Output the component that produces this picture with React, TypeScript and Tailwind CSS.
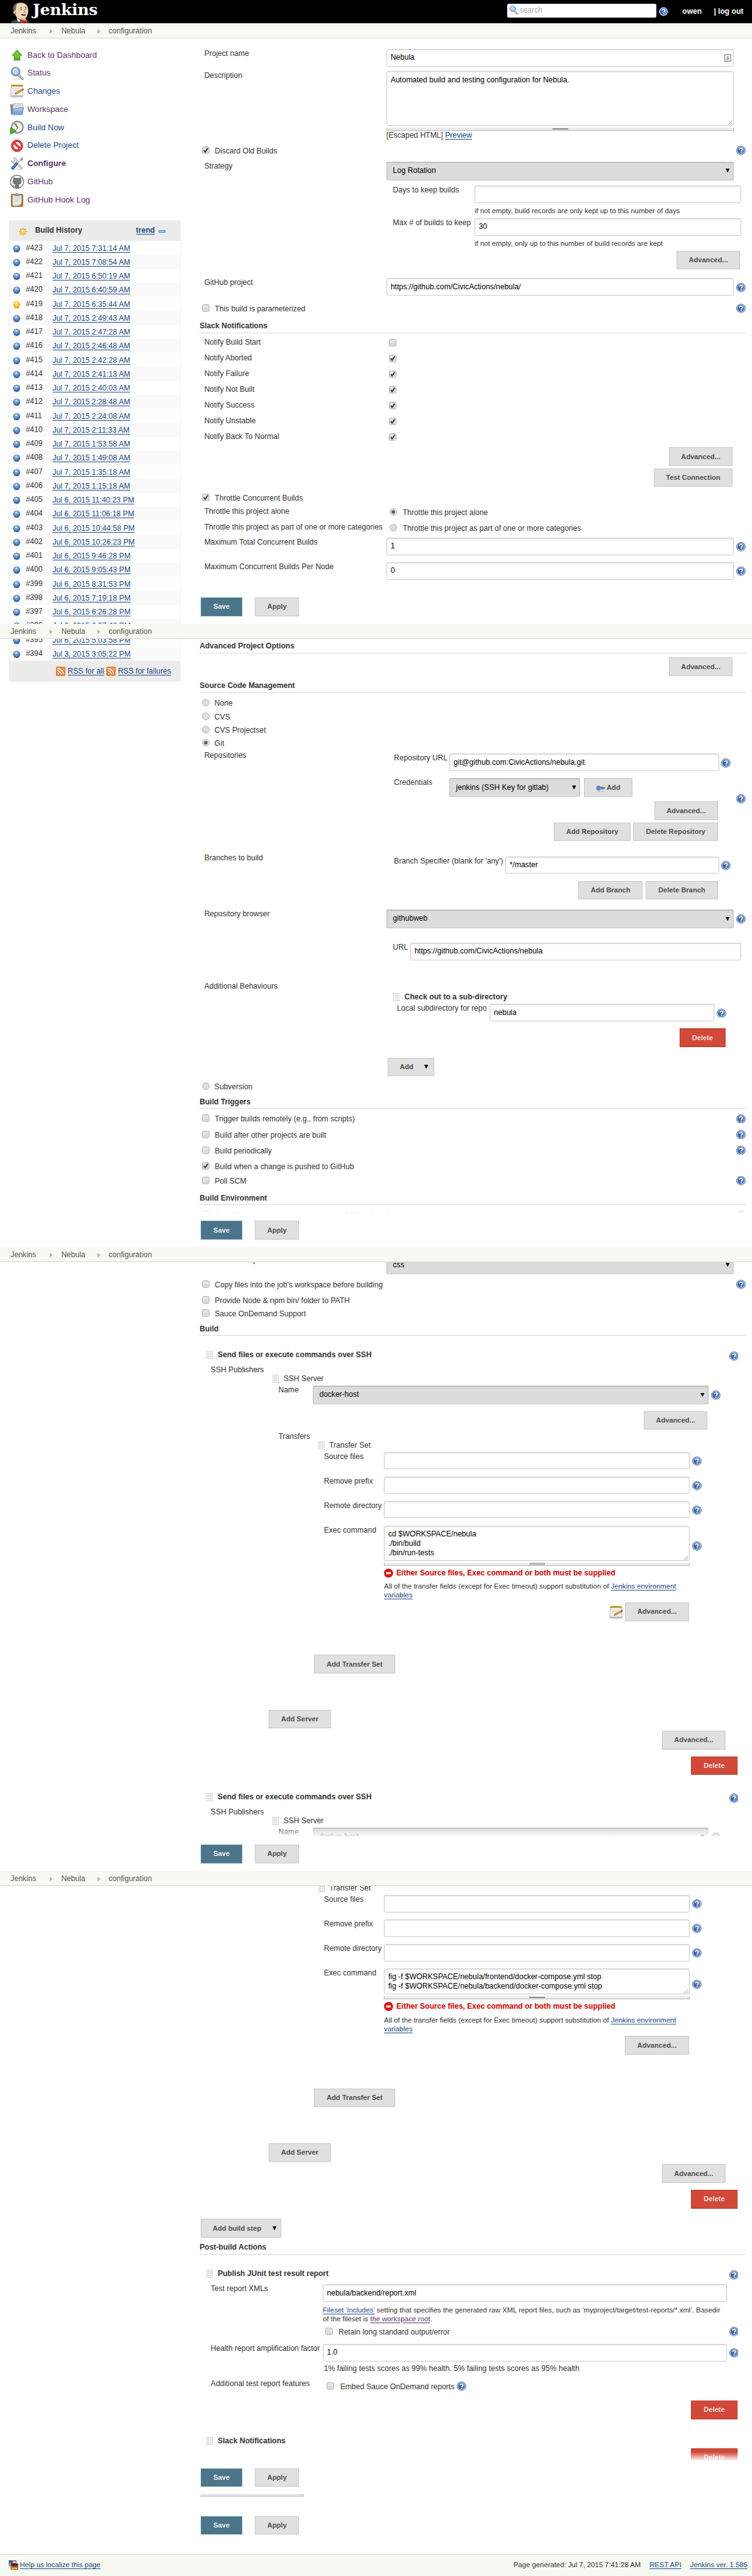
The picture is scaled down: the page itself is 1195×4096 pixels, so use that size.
import React from 'react';

const cx = (...parts: (string | undefined | false)[]) => parts.filter(Boolean).join(' ');

/* ---------- icons ---------- */

function Help({ className }: { className?: string }) {
  return (
    <svg viewBox="0 0 16 16" className={cx('h-4 w-4 shrink-0', className)}>
      <circle cx="8" cy="8" r="7.4" fill="#fff" stroke="#3b64a2" strokeWidth="1.1" />
      <circle cx="8" cy="8" r="6" fill="#3f68a6" />
      <path d="M8 2a6 6 0 0 1 6 6 6 6 0 0 1-4 5.6z" fill="#6f92c8" opacity="0.7" />
      <path d="M5.7 6.2C5.8 4.7 6.8 4 8.1 4c1.4 0 2.4.8 2.4 2 0 1.5-2.2 1.7-2.2 3.4" fill="none" stroke="#fff" strokeWidth="1.7" />
      <rect x="7.3" y="10.6" width="1.9" height="1.8" fill="#fff" />
    </svg>
  );
}

function Handle({ className }: { className?: string }) {
  return (
    <svg viewBox="0 0 12 14" className={cx('mt-[1px] h-[14px] w-3 shrink-0', className)}>
      {[0, 1, 2, 3, 4].map((r) =>
        [0, 1, 2, 3].map((c) => <rect key={`${r}-${c}`} x={c * 3} y={r * 3} width="1.7" height="1.5" fill="#b5b5b5" />),
      )}
    </svg>
  );
}

function ErrorIcon() {
  return (
    <svg viewBox="0 0 16 16" className="h-4 w-4 shrink-0">
      <circle cx="8" cy="8" r="7.7" fill="#c00" />
      <circle cx="8" cy="8" r="6.6" fill="#e01818" />
      <rect x="4" y="6.3" width="8" height="3.4" fill="#fff" />
    </svg>
  );
}

function Notepad({ className }: { className?: string }) {
  return (
    <svg viewBox="0 0 24 24" className={cx('h-6 w-6 shrink-0', className)}>
      <ellipse cx="12" cy="22" rx="11" ry="1.5" fill="#ddd" />
      <path d="M2 2.5h19.5l.5 18.5H1z" fill="#f4f4f2" stroke="#a5a5a2" strokeWidth="0.9" />
      <path d="M1.2 19h20.6v2.4H1z" fill="#bcbcb8" />
      <rect x="2" y="0.8" width="19.5" height="3" fill="#c4a915" />
      <path d="M3 .8v3M5.5.8v3M8 .8v3M10.500.8v3M13 .8v3M15.500.8v3M18 .8v3M20.500.8v3" stroke="#7c6a08" strokeWidth="0.7" />
      <path d="M4.500 7.500h13M4.500 10.500h10M4.500 13.500h6M4.500 16.500h5" stroke="#c6c6c6" strokeWidth="0.9" />
      <path d="M8.500 17l1.5-3 11-6 1.5 2.500-11 6z" fill="#e39a35" stroke="#8b5a16" strokeWidth="0.6" />
      <path d="M20 8.600l2-1.200q1.800 0 1.700 2l-2 1.300z" fill="#d84a3c" />
      <path d="M8.500 17l.8-1.600 1 1.200z" fill="#333" />
    </svg>
  );
}

function Magnifier({ className }: { className?: string }) {
  return (
    <svg viewBox="0 0 24 24" className={className}>
      <ellipse cx="11" cy="21.800" rx="8" ry="1.200" fill="#e4e4e4" />
      <path d="M14.500 14.500l7 6.500" stroke="#8c8c8c" strokeWidth="4" strokeLinecap="round" />
      <path d="M15 14.500l6.500 6" stroke="#c9c9c9" strokeWidth="2" strokeLinecap="round" />
      <circle cx="9.500" cy="8.500" r="7.400" fill="#bcd4f2" stroke="#8f95a3" strokeWidth="1.600" />
      <circle cx="9.500" cy="8.500" r="6" fill="none" stroke="#5b8ccf" strokeWidth="1.100" />
      <path d="M5 8a5 5 0 0 1 7-4.200" stroke="#fff" strokeWidth="1.500" fill="none" />
    </svg>
  );
}

const taskIcon = 'h-6 w-6 shrink-0';

const UpArrow = () => (
  <svg viewBox="0 0 24 24" className={taskIcon}>
    <ellipse cx="12" cy="20.500" rx="8" ry="1.300" fill="#ddd" />
    <path d="M12 2.500L20.500 12H17v8H7v-8H3.500z" fill="#55b318" stroke="#3f8a12" strokeWidth="0.8" />
    <path d="M12 4l6.500 7.300H16V15H8v-3.700H5.500z" fill="#86d04d" opacity="0.6" />
  </svg>
);
const Folder = () => (
  <svg viewBox="0 0 24 24" className={taskIcon}>
    <ellipse cx="12" cy="21.300" rx="10" ry="1.200" fill="#ddd" />
    <path d="M.8 3.500H6l1-1.300h3V20H2z" fill="#8a8a8a" stroke="#6d6d6d" strokeWidth="0.7" />
    <path d="M5.500 2H22l-.6 11H4.500z" fill="#e9e9e9" stroke="#999" strokeWidth="0.8" />
    <path d="M7.500 5h12M7.300 7.500h12" stroke="#bdbdbd" strokeWidth="0.8" />
    <path d="M5.500 10.500h8l1.800-1.700h8.200L21 20.500H3z" fill="#7aa9de" stroke="#4e7fba" strokeWidth="0.8" />
    <path d="M6.200 11.500h8l1.800-1.700h6.300l-.8 4.500H5.500z" fill="#a9c9ee" />
  </svg>
);
const BuildNow = () => (
  <svg viewBox="0 0 24 24" className={taskIcon}>
    <ellipse cx="13" cy="22.300" rx="8" ry="1.200" fill="#ddd" />
    <circle cx="12.500" cy="11" r="9.900" fill="#f1f1ec" stroke="#77779a" strokeWidth="2" />
    <circle cx="12.500" cy="11" r="8.300" fill="none" stroke="#c9c9d8" strokeWidth="0.9" />
    <path d="M12.500 11L7 5.500 12 3.500z" fill="#e8cb45" />
    <path d="M8 5l5 6.500-1.500 3" stroke="#333" strokeWidth="1.300" fill="none" />
    <path d="M.5 11.500l10.500 6-10.500 6z" fill="#4fae1c" stroke="#2e7a10" strokeWidth="0.7" />
  </svg>
);
const DeleteIcon = () => (
  <svg viewBox="0 0 24 24" className={taskIcon}>
    <ellipse cx="12" cy="21.800" rx="8" ry="1.200" fill="#ddd" />
    <circle cx="12" cy="11.500" r="8.300" fill="#fff" stroke="#b81414" strokeWidth="4" />
    <path d="M6 5.700l12 11.600" stroke="#b81414" strokeWidth="4" />
    <circle cx="12" cy="11.500" r="8.300" fill="none" stroke="#e24444" strokeWidth="2.600" />
    <path d="M6 5.700l12 11.600" stroke="#e24444" strokeWidth="2.600" />
  </svg>
);
const Tools = () => (
  <svg viewBox="0 0 24 24" className={taskIcon}>
    <ellipse cx="12" cy="21.800" rx="10" ry="1.200" fill="#e3e3e3" />
    <path d="M8 8l11.500 11.500" stroke="#9b9b9b" strokeWidth="3.800" strokeLinecap="round" />
    <path d="M8 8l11.500 11.500" stroke="#dedede" strokeWidth="2.400" strokeLinecap="round" />
    <path d="M7 1.800a5 5 0 1 1-4.800 5l2.800 1.700 2.700-2z" fill="#dcdcdc" stroke="#9b9b9b" strokeWidth="0.8" />
    <path d="M14 10.500l5-6.500" stroke="#b8b8b8" strokeWidth="1.800" />
    <path d="M17.500 5.500L20 1.500l2 1.500-1.200 4z" fill="#88a8d8" stroke="#6a86b0" strokeWidth="0.6" />
    <path d="M4.500 19.800l6.500-7.300" stroke="#2e5a9e" strokeWidth="5" strokeLinecap="round" />
    <path d="M4.500 19.500l6.300-7" stroke="#5f8fd3" strokeWidth="2.400" strokeLinecap="round" />
  </svg>
);
const GitHubIcon = () => (
  <svg viewBox="0 0 24 24" className={taskIcon}>
    <circle cx="12" cy="12" r="11.300" fill="#fff" stroke="#6f6f6f" strokeWidth="1.300" />
    <path
      d="M5.800 4.200c1.400 0 2.600.6 3.700 1.400 1.600-.3 3.400-.3 5 0 1.100-.8 2.300-1.400 3.700-1.400.5 1.300.5 2.500.2 3.600 1 1.200 1.400 2.500 1.200 4.200-.3 3-2.200 4.200-4.800 4.600.5.700.7 1.400.7 2.400v3.700a11 11 0 0 1-7 0v-2.400c-2 .3-2.800-.4-3.400-1.700-.3-.6-.7-1-1.100-1.400 1.300-.2 1.900.6 2.500 1.400.5.700 1.100.9 2.100.6.100-1 .4-1.800.8-2.400-2.600-.5-4.600-1.700-4.900-4.800-.2-1.700.3-3 1.200-4.200-.3-1.100-.3-2.300.1-3.600z"
      fill="#777"
    />
  </svg>
);
const Clipboard = () => (
  <svg viewBox="0 0 24 24" className={taskIcon}>
    <rect x="2" y="1.800" width="20" height="21.500" rx="0.800" fill="#a9772b" stroke="#85591a" strokeWidth="0.7" />
    <path d="M4.500 3.500h15v18h-15z" fill="#ececea" />
    <path d="M7 7.500h10M7 10h10M7 12.500h9M7 15h7" stroke="#c3c3c3" strokeWidth="1" />
    <path d="M19.500 17.500v4h-5z" fill="#8d8d8d" />
    <rect x="7" y="1.500" width="10" height="3.600" rx="1" fill="#8b8f8a" />
    <rect x="9.500" y="0.200" width="5" height="2.500" rx="1" fill="#9fa39e" />
  </svg>
);

const Sun = () => (
  <svg viewBox="0 0 16 16" className="h-4 w-4">
    <path d="M8 .5l1.500 2.800h-3zM8 15.500l1.500-2.800h-3zM.5 8l2.800-1.500v3zM15.500 8l-2.800-1.500v3zM2.700 2.700l3 .9-2.100 2.100zM13.300 2.700l-3 .9 2.100 2.100zM2.700 13.300l3-.9-2.100-2.100zM13.300 13.300l-3-.9 2.100-2.100z" fill="#ee9a2c" />
    <circle cx="8" cy="8" r="4.300" fill="#fbd84a" stroke="#f0a830" strokeWidth="0.8" />
    <circle cx="7.300" cy="7" r="2" fill="#fff3a8" />
  </svg>
);

function Ball({ yellow }: { yellow?: boolean }) {
  return (
    <svg viewBox="0 0 16 16" className="h-4 w-4">
      <defs>
        <radialGradient id={yellow ? 'ball-y' : 'ball-b'} cx="0.45" cy="0.32" r="0.65">
          <stop offset="0" stopColor={yellow ? '#fff2b0' : '#d9e3ef'} />
          <stop offset="0.45" stopColor={yellow ? '#fbd04a' : '#7296c6'} />
          <stop offset="1" stopColor={yellow ? '#ee9d1c' : '#2a5798'} />
        </radialGradient>
      </defs>
      <ellipse cx="8" cy="13.600" rx="5" ry="1.300" fill="#ccc" />
      <circle cx="8" cy="7.800" r="6.100" fill={yellow ? 'url(#ball-y)' : 'url(#ball-b)'} />
    </svg>
  );
}

const Rss = () => (
  <svg viewBox="0 0 16 16" className="h-4 w-4 shrink-0">
    <rect width="16" height="16" rx="2" fill="#e8772e" />
    <rect x="1" y="1" width="14" height="7" rx="1.500" fill="#f3a15e" opacity="0.6" />
    <circle cx="4.300" cy="11.800" r="1.500" fill="#fff" />
    <path d="M3 7.300a5.700 5.700 0 0 1 5.700 5.900M3 3.600a9.500 9.500 0 0 1 9.500 9.600" stroke="#fff" strokeWidth="1.700" fill="none" />
  </svg>
);

const Butler = () => (
  <svg viewBox="0 0 34 37" className="h-[37px] w-[34px]">
    <path d="M0 37c1-5 5-6 10-6.500h14c4 .5 7.500 2 8.500 6.500z" fill="#2c5064" stroke="#111" strokeWidth="0.6" />
    <path d="M10 27l2 6 7 4 7-5v-6z" fill="#f3f3f3" />
    <path d="M5.500 11C6 4 12 .8 18.500 1.200 26 1.700 30.500 7 30.300 15c-.1 8-3.500 15-10.300 15.500C12 31 8 25 7 19.500 4.500 18 4.500 13 5.500 11z" fill="#f0d6b7" stroke="#2a2018" strokeWidth="0.8" />
    <path d="M4.500 14C3 8 6 2.500 13 1.300c-2.500 2.500-4 5-3.700 9.200L8 15.500z" fill="#6e6660" />
    <path d="M6 15c-2 0-2.500 5 .8 6l2-1.500z" fill="#f0d6b7" stroke="#2a2018" strokeWidth="0.6" />
    <path d="M15.500 10.500q2-1.500 4 0M23.500 9.500q2-1 3.800.5" stroke="#2a2018" strokeWidth="0.9" fill="none" />
    <circle cx="18" cy="13" r="0.9" fill="#222" />
    <circle cx="25.300" cy="12.500" r="0.900" fill="#222" />
    <path d="M22.500 13l2.500 5.500-3 .8" stroke="#8a6a48" strokeWidth="0.800" fill="none" />
    <path d="M17.500 22.500c2-2.200 4-1.800 5.300-.6 1.500-1 3-.6 4 .8-3 1.500-6.500 1.500-9.300-.2z" fill="#3b3530" />
    <path d="M16 30.500l6.500 2 6.500-2.500v6.500l-6-1.500-7 2z" fill="#d9352d" stroke="#5a0e0c" strokeWidth="0.7" />
    <circle cx="22.700" cy="33.700" r="1.700" fill="#b92520" />
  </svg>
);

const Flags = () => (
  <svg viewBox="0 0 16 16" className="h-4 w-4">
    <rect x="0.500" y="0.500" width="12" height="9" fill="#fff" stroke="#555" />
    <path d="M1 2.500h11M1 5h11M1 7.500h11" stroke="#d9534f" strokeWidth="1.200" />
    <rect x="1" y="1" width="6" height="4.500" fill="#3a5fa8" />
    <rect x="4" y="6" width="11.500" height="9.500" fill="#e9c52b" stroke="#444" />
    <rect x="4.500" y="6.500" width="10.500" height="3" fill="#222" />
    <rect x="4.500" y="9.500" width="10.500" height="3" fill="#d33" />
  </svg>
);

const KeyIcon = () => (
  <svg viewBox="0 0 16 16" className="h-4 w-4">
    <ellipse cx="8" cy="14.500" rx="6" ry="0.900" fill="#c4c4c4" />
    <path d="M1 7.500L3 5l4 .5 1 1.500h7v3h-2v1h-2v-1H8l-1 2-4 .5-2-2z" fill="#5c8acb" stroke="#3d69a8" strokeWidth="0.700" />
    <path d="M12.500 0l1 2 2 1-2 1-1 2-1-2-2-1 2-1z" fill="#f6e34c" />
  </svg>
);

/* ---------- form controls ---------- */

function Input({ value, className }: { value?: string; className: string }) {
  return (
    <div className={cx('flex h-[30px] shrink-0 items-center rounded-[3px] border border-[#ccc] bg-white px-1.5 text-black shadow-[inset_0_1px_2px_rgba(0,0,0,0.12)]', className)}>
      {value}
    </div>
  );
}

const Down = ({ className }: { className?: string }) => (
  <svg viewBox="0 0 7 7" className={cx('h-[7px] w-[7px]', className)}>
    <path d="M0 0h7L3.500 7z" fill="#000" />
  </svg>
);

function Select({ value, className }: { value: string; className: string }) {
  return (
    <div className={cx('flex h-8 shrink-0 items-center justify-between rounded-[2px] border border-[#c8c8c8] bg-[#dcdcdc] pr-1.5 pl-2.5 text-black shadow-[inset_0_1px_2px_rgba(0,0,0,0.15)]', className)}>
      <span>{value}</span>
      <Down />
    </div>
  );
}

function Btn({ children, className }: { children: React.ReactNode; className: string }) {
  return (
    <div className={cx('flex h-8 shrink-0 items-center justify-center border border-[#c8c8c8] bg-[#e0e0e0] text-[12px] font-bold whitespace-nowrap text-[#4f4f4f]', className)}>
      {children}
    </div>
  );
}

const Advanced = () => <Btn className="w-[109px]">Advanced...</Btn>;

function DeleteBtn() {
  return (
    <div className="flex h-8 w-[79px] shrink-0 items-center justify-center border border-[#b53a2b] bg-[#d24939] text-[12px] font-bold text-[#f3dfdc]">
      Delete
    </div>
  );
}

function Check({ on, className }: { on?: boolean; className?: string }) {
  return (
    <svg viewBox="0 0 13 13" className={cx('h-[13px] w-[13px] shrink-0', className)}>
      <rect x="0.600" y="0.600" width="11.600" height="11.600" rx="2" fill="#e4e4e4" stroke="#a6a6a6" strokeWidth="1" />
      <rect x="1.500" y="6.500" width="10" height="5" rx="1" fill="#d9d9d9" />
      {on && <path d="M3 6.300l2.500 3L10 2.800" stroke="#3a3a3a" strokeWidth="2.200" fill="none" />}
    </svg>
  );
}

function Radio({ on, className }: { on?: boolean; className?: string }) {
  return (
    <svg viewBox="0 0 13 13" className={cx('h-[13px] w-[13px] shrink-0', className)}>
      <circle cx="6.500" cy="6.500" r="5.900" fill="#dedede" stroke="#adadad" />
      {on && <circle cx="6.500" cy="6.500" r="3" fill="#5a5a5a" />}
    </svg>
  );
}

function Row({ children, className }: { children?: React.ReactNode; className: string }) {
  return <div className={cx('flex shrink-0 items-start', className)}>{children}</div>;
}

function Label({ children, className = 'w-[320px] pl-2' }: { children: React.ReactNode; className?: string }) {
  return <div className={cx('shrink-0 whitespace-nowrap', className)}>{children}</div>;
}

function Header({ children, className }: { children: React.ReactNode; className: string }) {
  return <div className={cx('h-5 shrink-0 border-b border-[#dadada] font-bold', className)}>{children}</div>;
}

function CheckRow({ label, on, help, className }: { label: string; on?: boolean; help?: boolean; className: string }) {
  return (
    <Row className={className}>
      <Check on={on} className="ml-1" />
      <div className="ml-[9px] flex-1">{label}</div>
      {help && <Help className="-mt-px" />}
    </Row>
  );
}

function RadioRow({ label, on, className }: { label: string; on?: boolean; className: string }) {
  return (
    <Row className={className}>
      <Radio on={on} className="ml-1" />
      <div className="ml-[8.500px] pl-2">{label}</div>
    </Row>
  );
}

function Grip() {
  return (
    <div className="mt-[3px] flex h-[5px] w-full flex-col items-center justify-center gap-px border-x border-b border-[#b5b5b5] bg-[#ececec]">
      <div className="h-px w-[27px] bg-[#888]" />
      <div className="h-px w-[27px] bg-[#888]" />
    </div>
  );
}

function Area({ lines, className }: { lines: string[]; className: string }) {
  return (
    <div className={cx('flex justify-between rounded-[3px] border border-[#ccc] bg-white pt-1.5 pl-1.5 text-black shadow-[inset_0_1px_2px_rgba(0,0,0,0.12)]', className)}>
      <div>
        {lines.map((l) => (
          <div key={l}>{l}</div>
        ))}
      </div>
      <svg viewBox="0 0 10 10" className="h-2.5 w-2.5 self-end">
        <path d="M1 9l7-7M5 9l3-3" stroke="#777" strokeWidth="0.900" />
      </svg>
    </div>
  );
}

const Link = ({ children, visited }: { children: React.ReactNode; visited?: boolean }) => (
  <span className={cx('underline underline-offset-2', visited ? 'text-[#5c3566]' : 'text-[#204a87]')}>{children}</span>
);

/* ---------- page furniture ---------- */

function Crumbs() {
  const arrow = (
    <svg viewBox="0 0 5 8" className="mt-px h-2 w-[5px]">
      <path d="M0 0l5 4-5 4z" fill="#b0b3ac" />
    </svg>
  );
  return (
    <div className="flex h-[26px] shrink-0 items-center border-b border-[#d3d7cf] bg-[#f6faf2] pt-0.5 text-[#555753]">
      <div className="w-[67px] pl-[18px]">Jenkins</div>
      <div className="w-[38px] pl-[18px]">{arrow}</div>
      <div className="w-[62px]">Nebula</div>
      <div className="w-[19px]">{arrow}</div>
      <div>configuration</div>
    </div>
  );
}

function SaveBar({ className }: { className?: string }) {
  return (
    <div className={cx('flex shrink-0 gap-[22px] pl-0.5', className)}>
      <div className="flex h-8 w-[71px] items-center justify-center border border-[#5a8ca3] bg-[#4b758b] text-[12px] font-bold text-[#eeeeee]">Save</div>
      <Btn className="w-[75px]">Apply</Btn>
    </div>
  );
}

const Fade = () => <div className="absolute inset-x-0 bottom-0 h-[15px] bg-linear-to-b from-white/0 to-white" />;

const tasks: { label: string; icon: React.ReactNode; color: string }[] = [
  { label: 'Back to Dashboard', icon: <UpArrow />, color: 'text-[#5c3566]' },
  { label: 'Status', icon: <Magnifier className={taskIcon} />, color: 'text-[#5c3566]' },
  { label: 'Changes', icon: <Notepad />, color: 'text-[#204a87]' },
  { label: 'Workspace', icon: <Folder />, color: 'text-[#5c3566]' },
  { label: 'Build Now', icon: <BuildNow />, color: 'text-[#204a87]' },
  { label: 'Delete Project', icon: <DeleteIcon />, color: 'text-[#204a87]' },
  { label: 'Configure', icon: <Tools />, color: 'text-[#5c3566] font-bold' },
  { label: 'GitHub', icon: <GitHubIcon />, color: 'text-[#5c3566]' },
  { label: 'GitHub Hook Log', icon: <Clipboard />, color: 'text-[#5c3566]' },
];

const builds: [number, string][] = [
  [423, 'Jul 7, 2015 7:31:14 AM'],
  [422, 'Jul 7, 2015 7:08:54 AM'],
  [421, 'Jul 7, 2015 6:50:19 AM'],
  [420, 'Jul 7, 2015 6:40:59 AM'],
  [419, 'Jul 7, 2015 6:35:44 AM'],
  [418, 'Jul 7, 2015 2:49:43 AM'],
  [417, 'Jul 7, 2015 2:47:28 AM'],
  [416, 'Jul 7, 2015 2:46:48 AM'],
  [415, 'Jul 7, 2015 2:42:28 AM'],
  [414, 'Jul 7, 2015 2:41:13 AM'],
  [413, 'Jul 7, 2015 2:40:03 AM'],
  [412, 'Jul 7, 2015 2:28:48 AM'],
  [411, 'Jul 7, 2015 2:24:08 AM'],
  [410, 'Jul 7, 2015 2:11:33 AM'],
  [409, 'Jul 7, 2015 1:53:58 AM'],
  [408, 'Jul 7, 2015 1:49:08 AM'],
  [407, 'Jul 7, 2015 1:35:18 AM'],
  [406, 'Jul 7, 2015 1:15:18 AM'],
  [405, 'Jul 6, 2015 11:40:23 PM'],
  [404, 'Jul 6, 2015 11:06:18 PM'],
  [403, 'Jul 6, 2015 10:44:58 PM'],
  [402, 'Jul 6, 2015 10:26:23 PM'],
  [401, 'Jul 6, 2015 9:46:28 PM'],
  [400, 'Jul 6, 2015 9:05:43 PM'],
  [399, 'Jul 6, 2015 8:31:53 PM'],
  [398, 'Jul 6, 2015 7:19:18 PM'],
  [397, 'Jul 6, 2015 6:26:28 PM'],
  [396, 'Jul 6, 2015 6:07:43 PM'],
  [395, 'Jul 6, 2015 5:03:58 PM'],
  [394, 'Jul 3, 2015 3:05:22 PM'],
];

function BuildRow({ build }: { build: [number, string] }) {
  const [id, when] = build;
  return (
    <div className={cx('flex h-6 shrink-0 items-start border-x border-[#eee] pt-1', id % 2 === 0 && 'bg-[#fafafa]')}>
      <div className="w-7 pt-px pl-1">
        <Ball yellow={id === 419} />
      </div>
      <div className="w-[46px]">#{id}</div>
      <div className="pt-px">
        <Link>{when}</Link>
      </div>
    </div>
  );
}

/* ---------- form sections ---------- */

const notify: [string, boolean][] = [
  ['Notify Build Start', false],
  ['Notify Aborted', true],
  ['Notify Failure', true],
  ['Notify Not Built', true],
  ['Notify Success', true],
  ['Notify Unstable', true],
  ['Notify Back To Normal', true],
];

function GeneralForm() {
  return (
    <div className="relative flex h-[944px] shrink-0 flex-col overflow-hidden pt-[18px]">
      <Row className="h-[38px]">
        <Label>Project name</Label>
        <div className="flex h-[30px] w-[595px] items-center justify-between rounded-[3px] border border-[#ccc] bg-white pr-[3px] pl-1.5 text-black shadow-[inset_0_1px_2px_rgba(0,0,0,0.12)]">
          <span>Nebula</span>
          <svg viewBox="0 0 12 13" className="h-[13px] w-3">
            <rect x="0.800" y="0.800" width="10.400" height="11.400" fill="#fff" stroke="#8c8c8c" strokeWidth="1.500" />
            <circle cx="6" cy="4.700" r="1.300" fill="#777" />
            <path d="M3.500 6.500h5V8h-5zM3.500 8.700h5v1.200h-5z" fill="#999" />
          </svg>
        </div>
      </Row>
      <Row className="h-[129px]">
        <Label>Description</Label>
        <div className="w-[595px]">
          <Area className="h-[94px]" lines={['Automated build and testing configuration for Nebula.']} />
          <Grip />
          <div>
            [Escaped HTML] <Link>Preview</Link>
          </div>
        </div>
      </Row>
      <CheckRow label="Discard Old Builds" on help className="h-[26px]" />
      <Row className="h-[41px]">
        <Label>Strategy</Label>
        <Select className="w-[595px]" value="Log Rotation" />
      </Row>
      <Row className="h-14 pl-[331px]">
        <Label className="w-[140px]">Days to keep builds</Label>
        <div>
          <Input className="w-[457px]" />
          <div className="mt-1.5 text-[12.200px]">if not empty, build records are only kept up to this number of days</div>
        </div>
      </Row>
      <Row className="h-14 pl-[331px]">
        <Label className="w-[140px]">Max # of builds to keep</Label>
        <div>
          <Input className="w-[457px]" value="30" />
          <div className="mt-1.5 text-[12.200px]">if not empty, only up to this number of build records are kept</div>
        </div>
      </Row>
      <Row className="h-[47px] justify-end pr-[9px]">
        <Advanced />
      </Row>
      <Row className="h-[45px]">
        <Label>GitHub project</Label>
        <Input className="w-[595px]" value="https://github.com/CivicActions/nebula/" />
        <Help className="mt-2 ml-1" />
      </Row>
      <CheckRow label="This build is parameterized" help className="h-[29px]" />
      <Header className="mb-[7px]">Slack Notifications</Header>
      {notify.map(([label, on]) => (
        <Row key={label} className="h-[27px]">
          <Label className="w-[324px] pt-px pl-2">{label}</Label>
          <Check on={on} className="mt-[3px]" />
        </Row>
      ))}
      <Row className="h-9 justify-end pr-[22px]">
        <Advanced />
      </Row>
      <Row className="h-[43px] justify-end pr-[22px]">
        <Btn className="w-[135px]">Test Connection</Btn>
      </Row>
      <CheckRow label="Throttle Concurrent Builds" on className="h-[23px]" />
      <Row className="h-[27px]">
        <Label className="w-[325px] pl-2">Throttle this project alone</Label>
        <Radio on className="mt-0.5" />
        <div className="mt-0.5 ml-2.5">Throttle this project alone</div>
      </Row>
      <Row className="h-[26px]">
        <Label className="w-[325px] pl-2">Throttle this project as part of one or more categories</Label>
        <Radio className="mt-0.5" />
        <div className="mt-0.5 ml-2.5">Throttle this project as part of one or more categories</div>
      </Row>
      <Row className="h-[42px]">
        <Label>Maximum Total Concurrent Builds</Label>
        <Input className="w-[595px]" value="1" />
        <Help className="mt-2 ml-1" />
      </Row>
      <Row className="h-[46px]">
        <Label>Maximum Concurrent Builds Per Node</Label>
        <Input className="w-[595px]" value="0" />
        <Help className="mt-2 ml-1" />
      </Row>
    </div>
  );
}

function ScmForm() {
  return (
    <div className="relative flex h-[985px] shrink-0 flex-col overflow-hidden pt-[5px]">
      <Header className="mb-[7px]">Advanced Project Options</Header>
      <Row className="h-[41px] justify-end pr-[22px]">
        <Advanced />
      </Row>
      <Header className="mb-2.5">Source Code Management</Header>
      <ScmRadio label="None" className="h-[23px]" />
      <ScmRadio label="CVS" className="h-[23px]" />
      <ScmRadio label="CVS Projectset" className="h-[23px]" />
      <ScmRadio label="Git" on className="h-5" />
      <Row className="h-[176px]">
        <Label>Repositories</Label>
        <div className="w-[599px] pt-[5px]">
          <Row className="h-[42px]">
            <Label className="w-[108px] pl-[13px]">Repository URL</Label>
            <Input className="w-[462px]" value="git@github.com:CivicActions/nebula.git" />
            <Help className="mt-2 ml-1" />
          </Row>
          <Row className="h-10">
            <Label className="w-[108px] pl-[13px]">Credentials</Label>
            <Select className="w-[224px]" value="jenkins (SSH Key for gitlab)" />
            <Btn className="ml-1.5 w-[84px] gap-0.5">
              <KeyIcon />
              Add
            </Btn>
          </Row>
          <Row className="h-9 justify-end pr-[31px]">
            <Advanced />
          </Row>
          <Row className="justify-end gap-[5px] pr-[31px]">
            <Btn className="w-[131px]">Add Repository</Btn>
            <Btn className="w-[145px]">Delete Repository</Btn>
          </Row>
        </div>
        <Help className="mt-[75px]" />
      </Row>
      <Row className="h-24">
        <Label>Branches to build</Label>
        <div className="w-[599px] pt-[5px]">
          <Row className="h-[42px]">
            <Label className="w-[204px] pl-[13px]">Branch Specifier (blank for 'any')</Label>
            <Input className="w-[366px]" value="*/master" />
            <Help className="mt-2 ml-1" />
          </Row>
          <Row className="justify-end gap-[5px] pr-[31px]">
            <Btn className="w-[110px]">Add Branch</Btn>
            <Btn className="w-[124px]">Delete Branch</Btn>
          </Row>
        </div>
      </Row>
      <Row className="h-[57px]">
        <Label>Repository browser</Label>
        <Select className="w-[595px]" value="githubweb" />
        <Help className="mt-[9px] ml-1" />
      </Row>
      <Row className="h-[67px] pl-[331px]">
        <Label className="w-[30px]">URL</Label>
        <Input className="w-[567px]" value="https://github.com/CivicActions/nebula" />
      </Row>
      <Row className="h-[173px]">
        <Label>Additional Behaviours</Label>
        <div className="w-[595px] pt-[18px]">
          <Row className="h-5 gap-[7px] pl-3 font-bold">
            <Handle />
            Check out to a sub-directory
          </Row>
          <Row className="h-[42px]">
            <Label className="w-[177px] pl-[18px]">Local subdirectory for repo</Label>
            <Input className="w-[385px]" value="nebula" />
            <Help className="mt-2 ml-1" />
          </Row>
          <Row className="h-[50px] justify-end pr-3.5">
            <DeleteBtn />
          </Row>
          <Btn className="ml-0.5 w-20 gap-[19px] pl-[11px]">
            Add
            <Down className="h-1.5" />
          </Btn>
        </div>
      </Row>
      <ScmRadio label="Subversion" className="h-[25px]" />
      <Header className="mb-2.5">Build Triggers</Header>
      <CheckRow label="Trigger builds remotely (e.g., from scripts)" help className="h-[27px]" />
      <CheckRow label="Build after other projects are built" help className="h-[27px]" />
      <CheckRow label="Build periodically" help className="h-[27px]" />
      <CheckRow label="Build when a change is pushed to GitHub" on className="h-[25px]" />
      <CheckRow label="Poll SCM" help className="h-[29px]" />
      <Header className="mb-2.5">Build Environment</Header>
      <CheckRow label="Send files or execute commands over SSH before the build starts" help className="h-[27px]" />
      <Fade />
    </div>
  );
}

function ScmRadio({ label, on, className }: { label: string; on?: boolean; className: string }) {
  return (
    <Row className={className}>
      <Radio on={on} className="ml-[4.500px]" />
      <div className="ml-2">{label}</div>
    </Row>
  );
}

function StepTitle({ children, help, className }: { children: React.ReactNode; help?: boolean; className: string }) {
  return (
    <Row className={cx('pl-3 font-bold', className)}>
      <Handle />
      <div className="ml-[7px] flex-1">{children}</div>
      {help && <Help className="mt-0.5 mr-3" />}
    </Row>
  );
}

function ServerPart() {
  return (
    <>
      <StepTitle help className="h-[26px]">
        Send files or execute commands over SSH
      </StepTitle>
      <Row className="h-[15px] pl-[19px]">SSH Publishers</Row>
      <Row className="h-[19px] gap-[7px] pl-[125px]">
        <Handle />
        SSH Server
      </Row>
      <Row className="h-11 pl-[135px]">
        <Label className="w-[59px]">Name</Label>
        <Select className="w-[678px]" value="docker-host" />
        <Help className="mt-[9px] ml-1" />
      </Row>
      <Row className="h-9 justify-end pr-[65px]">
        <Advanced />
      </Row>
      <Row className="h-[15px] pl-[135px]">Transfers</Row>
    </>
  );
}

function Field({ label }: { label: string }) {
  return (
    <Row className="h-[42px] pl-[213px]">
      <Label className="w-[103px]">{label}</Label>
      <Input className="w-[524px]" />
      <Help className="mt-2 ml-1" />
    </Row>
  );
}

function TransferPart({ lines, areaClass, helpClass, edit }: { lines: string[]; areaClass: string; helpClass: string; edit?: boolean }) {
  return (
    <>
      <Row className="h-[19px] gap-[7px] pl-[203px]">
        <Handle />
        Transfer Set
      </Row>
      <Field label="Source files" />
      <Field label="Remove prefix" />
      <Field label="Remote directory" />
      <Row className="pb-[4px] pl-[213px]">
        <Label className="w-[103px]">Exec command</Label>
        <div className="w-[524px]">
          <Area className={areaClass} lines={lines} />
          <Grip />
          <div className="mt-[5px] flex h-6 gap-[5px] font-bold text-[#cc0000]">
            <ErrorIcon />
            Either Source files, Exec command or both must be supplied
          </div>
          <div className="text-[12.200px] leading-[15px]">
            All of the transfer fields (except for Exec timeout) support substitution of <Link>Jenkins environment</Link>
            <br />
            <Link>variables</Link>
          </div>
        </div>
        <Help className={cx('ml-1', helpClass)} />
      </Row>
      <Row className="h-[90px] justify-end gap-1 pr-[97px]">
        {edit && <Notepad className="mt-[5px]" />}
        <Advanced />
      </Row>
      <Row className="h-[94px] pl-[196px]">
        <Btn className="w-[139px]">Add Transfer Set</Btn>
      </Row>
      <Row className="h-9 pl-[118px]">
        <Btn className="w-[107px]">Add Server</Btn>
      </Row>
      <Row className="h-11 justify-end pr-[34px]">
        <Advanced />
      </Row>
      <Row className="h-[50px] justify-end pr-3.5">
        <DeleteBtn />
      </Row>
    </>
  );
}

function BuildForm() {
  return (
    <div className="relative flex h-[985px] shrink-0 flex-col overflow-hidden">
      <Row className="-mt-3 h-[43px]">
        <Label>ANSI color map</Label>
        <Select className="w-[595px]" value="css" />
      </Row>
      <CheckRow label="Copy files into the job's workspace before building" help className="h-[27px]" />
      <CheckRow label="Provide Node & npm bin/ folder to PATH" className="h-[23px]" />
      <CheckRow label="Sauce OnDemand Support" className="h-[25px]" />
      <Header className="mb-[25px]">Build</Header>
      <ServerPart />
      <TransferPart edit areaClass="h-[61px]" helpClass="mt-7" lines={['cd $WORKSPACE/nebula', './bin/build', './bin/run-tests']} />
      <div className="h-3 shrink-0" />
      <ServerPart />
      <Fade />
    </div>
  );
}

function PostBuildForm() {
  return (
    <div className="relative flex h-[985px] shrink-0 flex-col overflow-hidden">
      <div className="-mt-1 flex shrink-0 flex-col">
        <TransferPart
          areaClass="h-[45px]"
          helpClass="mt-5"
          lines={['fig -f $WORKSPACE/nebula/frontend/docker-compose.yml stop', 'fig -f $WORKSPACE/nebula/backend/docker-compose.yml stop']}
        />
      </div>
      <Row className="h-[41px] pl-0.5">
        <Btn className="w-[138px] gap-[19px] pl-3">
          Add build step
          <Down className="h-1.5" />
        </Btn>
      </Row>
      <Header className="mb-[25px]">Post-build Actions</Header>
      <StepTitle help className="h-[26px]">
        Publish JUnit test result report
      </StepTitle>
      <Row className="h-[37px]">
        <Label className="w-[211px] pl-[19px]">Test report XMLs</Label>
        <Input className="w-[692px]" value="nebula/backend/report.xml" />
      </Row>
      <Row className="h-[37px] pl-[211px]">
        <div className="text-[12.200px] leading-[15px] whitespace-nowrap">
          <Link>Fileset ‘includes’</Link> setting that specifies the generated raw XML report files, such as ‘myproject/target/test-reports/*.xml’. Basedir
          <br />
          of the fileset is <Link visited>the workspace root</Link>.
        </div>
      </Row>
      <Row className="h-7 pl-[215px]">
        <Check />
        <div className="ml-2.5 flex-1">Retain long standard output/error</div>
        <Help className="-mt-px mr-3" />
      </Row>
      <Row className="h-[35px]">
        <Label className="w-[211px] pl-[19px]">Health report amplification factor</Label>
        <Input className="w-[692px]" value="1.0" />
        <Help className="mt-2 ml-1" />
      </Row>
      <Row className="h-[25px] pl-[213px]">1% failing tests scores as 99% health. 5% failing tests scores as 95% health</Row>
      <Row className="h-[37px]">
        <Label className="w-[218px] pl-[19px]">Additional test report features</Label>
        <Check className="mt-1.5" />
        <div className="mt-1.5 ml-2.5">Embed Sauce OnDemand reports</div>
        <Help className="mt-[5px] ml-1" />
      </Row>
      <Row className="h-[62px] justify-end pr-3.5">
        <DeleteBtn />
      </Row>
      <StepTitle className="h-5">Slack Notifications</StepTitle>
      <Row className="justify-end pr-3.5">
        <DeleteBtn />
      </Row>
      <Fade />
    </div>
  );
}

function Main({ children }: { children: React.ReactNode }) {
  return <div className="flex w-[935px] shrink-0 flex-col">{children}</div>;
}

/* ---------- page ---------- */

export default function App() {
  return (
    <div className="h-[4096px] w-[1195px] overflow-hidden bg-white">
      <div className="flex h-[4416px] w-[1288.500px] flex-col font-['Liberation_Sans',Arial,sans-serif] text-[13px] leading-4 text-[#333] [zoom:0.9276]">
        <header className="flex h-10 shrink-0 items-center bg-black font-bold text-white">
          <div className="flex w-[869px] items-end pl-[18px]">
            <div className="pt-[3px]">
              <Butler />
            </div>
            <div className="mb-[8px] ml-[4px] font-['DejaVu_Serif',serif] text-[27px] leading-[30px] font-bold tracking-[-0.3px]">Jenkins</div>
          </div>
          <div className="-mt-1 flex h-6 w-[255px] items-center gap-0.5 rounded-[3px] bg-white pl-[3px] font-normal text-[#aaa]">
            <Magnifier className="h-4 w-4" />
            search
          </div>
          <Help className="ml-[5px]" />
          <div className="ml-6 w-[54px]">owen</div>
          <div>| log out</div>
        </header>
        <Crumbs />

        <div className="flex h-[1003px] shrink-0 overflow-hidden">
          <aside className="w-[342px] shrink-0 pt-[13.500px]">
            {tasks.map((t) => (
              <div key={t.label} className="flex h-[31px] items-center gap-[6px] pl-[17px]">
                {t.icon}
                <span className={cx('text-[14px]', t.color)}>{t.label}</span>
              </div>
            ))}
            <div className="mt-[18.500px] ml-[15px] flex w-[294px] flex-col">
              <div className="flex h-9 shrink-0 items-center rounded-t-[3px] bg-[#ececec] font-bold">
                <div className="w-[45px] pt-1 pl-4">
                  <Sun />
                </div>
                <div className="w-[173px]">Build History</div>
                <Link>trend</Link>
                <div className="mt-1 ml-1.5 h-1 w-3 border border-[#5c86ba] bg-[#a9c6ea]" />
              </div>
              {builds.slice(0, 28).map((b) => (
                <BuildRow key={b[0]} build={b} />
              ))}
            </div>
          </aside>
          <Main>
            <GeneralForm />
            <SaveBar className="pt-3.5" />
          </Main>
        </div>

        <Crumbs />
        <div className="flex h-[1043px] shrink-0 overflow-hidden">
          <aside className="w-[342px] shrink-0">
            <div className="-mt-2.5 ml-[15px] flex w-[294px] flex-col">
              {builds.slice(28).map((b) => (
                <BuildRow key={b[0]} build={b} />
              ))}
              <div className="flex h-9 items-center justify-end gap-1 rounded-b-[3px] bg-[#ececec] pr-4">
                <Rss />
                <Link>RSS for all</Link>
                <Rss />
                <Link>RSS for failures</Link>
              </div>
            </div>
          </aside>
          <Main>
            <ScmForm />
            <SaveBar className="pt-[13px]" />
          </Main>
        </div>

        <Crumbs />
        <div className="flex h-[1043px] shrink-0 overflow-hidden pl-[342px]">
          <Main>
            <BuildForm />
            <SaveBar className="pt-[13px]" />
          </Main>
        </div>

        <Crumbs />
        <div className="flex h-[1145px] shrink-0 overflow-hidden pl-[342px]">
          <Main>
            <PostBuildForm />
            <SaveBar className="pt-[13px]" />
            <div className="mt-[13px] ml-0.5 h-1 w-[177px] shrink-0 border-x border-b border-[#c8c8c8] bg-[#e0e0e0]" />
            <SaveBar className="pt-[33px]" />
          </Main>
        </div>

        <footer className="flex h-[40px] shrink-0 items-start border-t border-[#d3d7cf] bg-[#f6faf2] pt-2.5 text-[12.200px]">
          <div className="flex flex-1 items-start gap-[3px] pl-[15px]">
            <Flags />
            <Link>Help us localize this page</Link>
          </div>
          <div className="flex gap-[15px] pr-2">
            <span>Page generated: Jul 7, 2015 7:41:28 AM</span>
            <Link>REST API</Link>
            <Link>Jenkins ver. 1.585</Link>
          </div>
        </footer>
      </div>
    </div>
  );
}
